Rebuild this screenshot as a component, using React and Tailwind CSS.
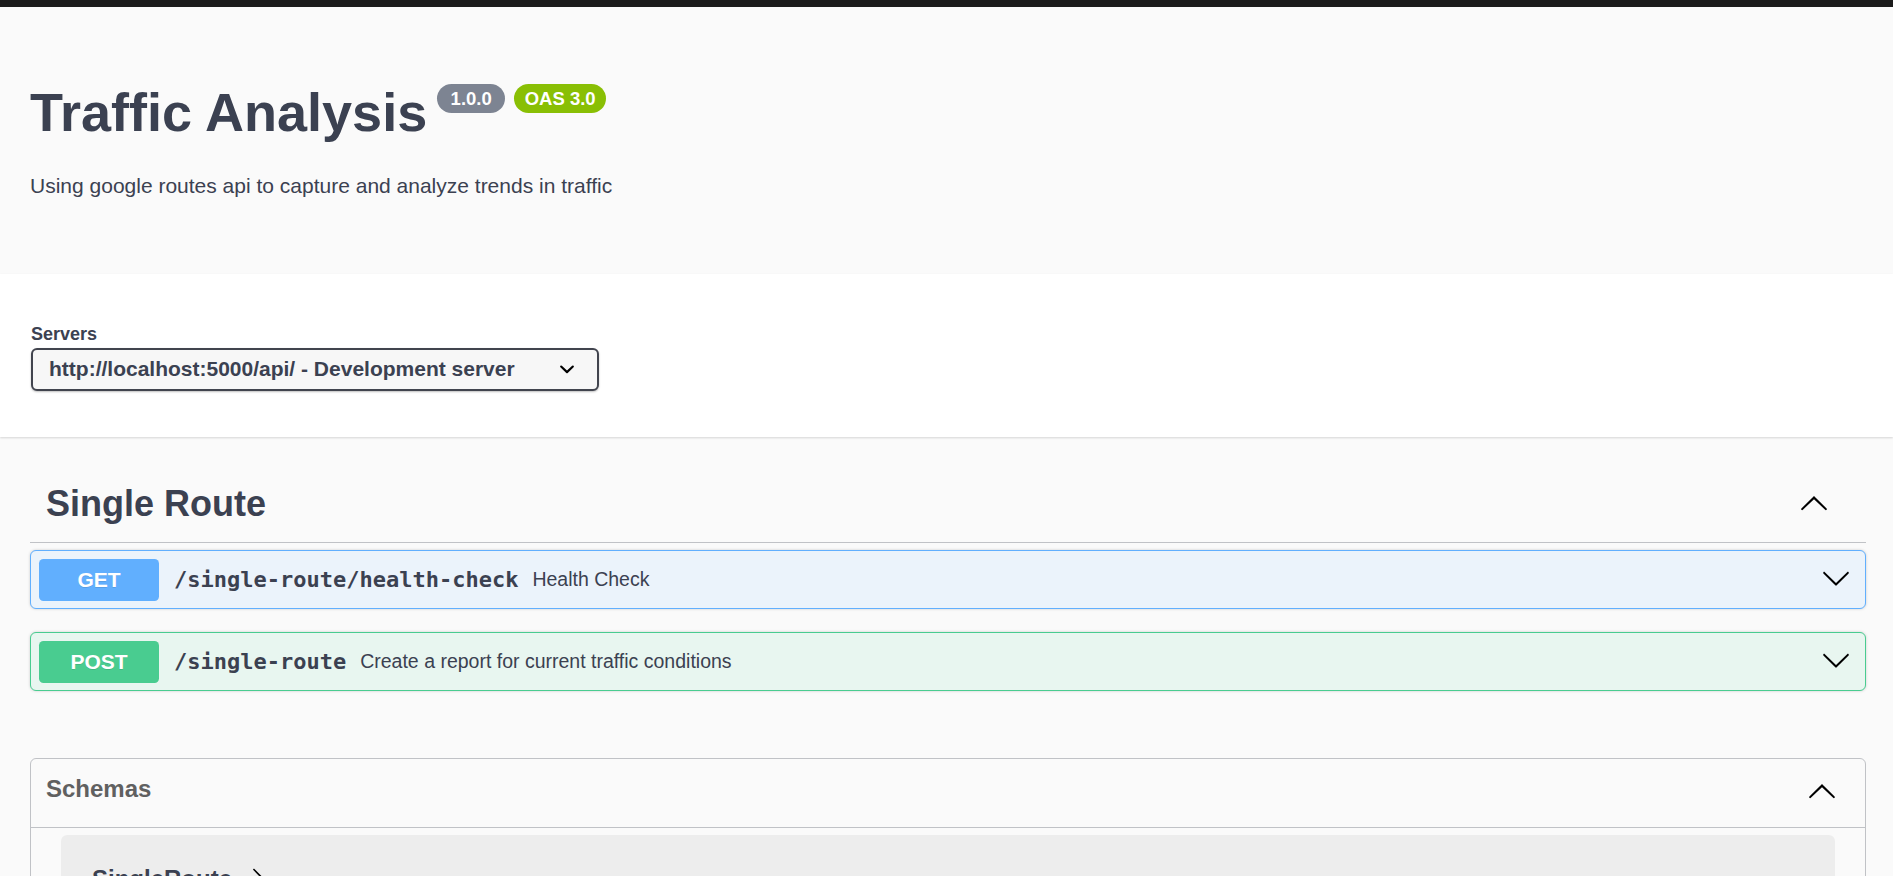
import React from "react";

const SANS = { fontFamily: '"Liberation Sans", Arial, sans-serif' };
const MONO = { fontFamily: '"DejaVu Sans Mono", "Liberation Mono", monospace' };

function ArrowDown({ up = false, className = "" }) {
  return (
    <svg
      viewBox="0 0 20 20"
      width="30"
      height="30"
      className={className}
      style={up ? { transform: "rotate(180deg)" } : undefined}
    >
      <path
        fill="#000"
        d="M17.418 6.109c.272-.268.709-.268.979 0s.271.701 0 .969l-7.908 7.83c-.27.268-.707.268-.979 0l-7.908-7.83c-.27-.268-.27-.701 0-.969.271-.268.709-.268.979 0L10 13.25l7.418-7.141z"
      />
    </svg>
  );
}

function SelectChevron() {
  return (
    <svg viewBox="0 0 20 20" width="30" height="30" className="shrink-0">
      <path
        fill="#000"
        d="M13.418 7.859a.695.695 0 0 1 .978 0 .68.68 0 0 1 0 .969l-3.908 3.83a.697.697 0 0 1-.979 0l-3.908-3.830a.68.68 0 0 1 0-.969.695.695 0 0 1 .978 0L10 11l3.418-3.141z"
      />
    </svg>
  );
}

function OpBlock({ method, path, desc, border, bg, badge, className = "" }) {
  return (
    <div
      className={`flex items-center rounded-[6px] border pl-[8px] pr-[8px] pt-[8px] pb-[7px] shadow-[0_0_3px_rgba(0,0,0,0.19)] ${border} ${bg} ${className}`}
    >
      <div
        className={`flex h-[42px] w-[120px] shrink-0 items-center justify-center rounded-[4.5px] text-[21px] font-bold text-white [text-shadow:0_1px_0_rgba(0,0,0,0.1)] ${badge}`}
        style={SANS}
      >
        {method}
      </div>
      <span
        className="pl-[15px] pr-[14px] text-[22px] font-bold text-[#3b4151]"
        style={MONO}
      >
        {path}
      </span>
      <span className="text-[19.5px] text-[#3b4151]" style={SANS}>
        {desc}
      </span>
      <ArrowDown className="ml-auto mr-[6px] -mt-[3px]" />
    </div>
  );
}

export default function App() {
  return (
    <div className="min-h-screen bg-[#fafafa] text-[#3b4151]" style={SANS}>
      <div className="h-[7px] bg-[#1b1b1b]" />

      {/* Info header */}
      <div className="bg-[#fafafa] px-[30px] pt-[74px] pb-[72px]">
        <div className="flex items-start">
          <h1 className="m-0 text-[54px] font-bold leading-[62px] text-[#3b4151]">
            Traffic Analysis
          </h1>
          <span className="ml-[10px] mt-[3px] flex h-[29px] w-[68px] items-center justify-center rounded-full bg-[#7d8492] text-[18.5px] font-bold text-white">
            1.0.0
          </span>
          <span className="ml-[9px] mt-[3px] flex h-[29px] w-[92px] items-center justify-center rounded-full bg-[#89bf04] text-[18.5px] font-bold text-white">
            OAS 3.0
          </span>
        </div>
        <p className="mt-[27px] text-[21px] leading-[31.5px] text-[#3b4151]">
          Using google routes api to capture and analyze trends in traffic
        </p>
      </div>

      {/* Servers */}
      <div className="relative z-10 bg-white px-[31px] pt-[50px] pb-[46px] shadow-[0_1px_2px_0_rgba(0,0,0,0.15)]">
        <div className="text-[18px] font-bold leading-[21px] text-[#3b4151]">Servers</div>
        <div className="mt-[3px] flex h-[43px] w-[568px] items-center justify-between rounded-[6px] border-2 border-[#41444e] bg-[#f7f7f7] pl-[16px] pr-[15px] shadow-[0_1px_2px_0_rgba(0,0,0,0.25)]">
          <span className="text-[21px] font-bold text-[#3b4151]">
            http://localhost:5000/api/ - Development server
          </span>
          <SelectChevron />
        </div>
      </div>

      {/* Tag section */}
      <div className="pl-[30px] pr-[27px] pt-[30px]">
        <div className="flex items-center border-b border-[rgba(59,65,81,0.3)] py-[15px] pl-[16px] pr-[30px]">
          <h3 className="flex h-[45px] items-center text-[36px] font-bold text-[#3b4151]">
            Single Route
          </h3>
          <ArrowDown up className="ml-auto mr-[7px] -mt-[1px]" />
        </div>
        <div className="flex flex-col pt-[7px]">
          <OpBlock
            method="GET"
            path="/single-route/health-check"
            desc="Health Check"
            border="border-[#61affe]"
            bg="bg-[#ebf3fb]"
            badge="bg-[#61affe]"
            className="mb-[23px]"
          />
          <OpBlock
            method="POST"
            path="/single-route"
            desc="Create a report for current traffic conditions"
            border="border-[#49cc90]"
            bg="bg-[#e8f6f0]"
            badge="bg-[#49cc90]"
          />
        </div>
      </div>

      {/* Schemas */}
      <div className="ml-[30px] mr-[27px] mt-[67px] rounded-[6px] border border-[rgba(59,65,81,0.3)]">
        <div className="flex items-center border-b border-[rgba(59,65,81,0.3)] py-[15px] pl-[15px] pr-[28px]">
          <h4 className="flex h-[38px] items-center pb-[7px] text-[24px] font-bold text-[#606060]">
            Schemas
          </h4>
          <ArrowDown up className="ml-auto -mt-[2px]" />
        </div>
        <div className="mx-[30px] mt-[7px] mb-[22px] h-[200px] rounded-[6px] bg-[rgba(0,0,0,0.05)] px-[31px] pt-[26px]">
          <div className="flex items-center">
            <span className="text-[24px] font-bold text-[#3b4151]">SingleRoute</span>
            <svg viewBox="0 0 20 20" width="24" height="24" className="ml-[14px]">
              <path
                fill="#000"
                d="M13.25 10L6.109 2.58c-.268-.27-.268-.707 0-.979.268-.27.701-.27.969 0l7.83 7.908c.268.271.268.709 0 .979l-7.830 7.908c-.268.271-.701.27-.969 0-.268-.269-.268-.707 0-.979L13.25 10z"
              />
            </svg>
          </div>
        </div>
      </div>
    </div>
  );
}
